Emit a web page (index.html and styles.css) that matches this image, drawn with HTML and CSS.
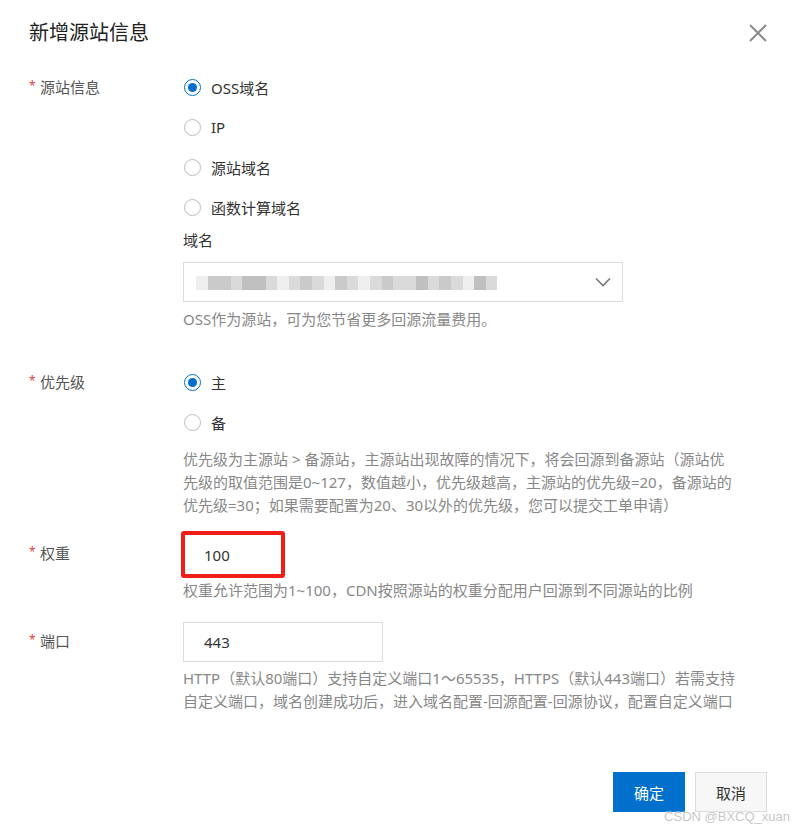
FILE: index.html
```html
<!DOCTYPE html>
<html lang="zh-CN">
<head>
<meta charset="utf-8">
<title>新增源站信息</title>
<link rel="stylesheet" href="styles.css">
</head>
<body>
<div class="dialog">
  <div class="header">
    <div class="title">新增源站信息</div>
    <svg class="close" width="18" height="18" viewBox="0 0 18 18"><path d="M1 1 L17 17 M17 1 L1 17" stroke="#8a8a8a" stroke-width="2" fill="none"/></svg>
  </div>

  <div class="form">
    <div class="row row-origin">
      <div class="label"><span class="req">*</span>源站信息</div>
      <div class="content">
        <div class="radios">
          <div class="radio"><span class="dot checked"></span><span>OSS域名</span></div>
          <div class="radio"><span class="dot"></span><span>IP</span></div>
          <div class="radio"><span class="dot"></span><span>源站域名</span></div>
          <div class="radio"><span class="dot"></span><span>函数计算域名</span></div>
        </div>
        <div class="sublabel">域名</div>
        <div class="select">
          <div class="blur">
            <span class="b c1"></span><span class="b c2"></span><span class="b c2"></span><span class="b c3"></span><span class="b c4"></span><span class="b c4"></span><span class="b c3"></span><span class="b c1"></span><span class="b c3"></span><span class="b c2"></span><span class="b c3"></span><span class="b c1"></span><span class="b c2"></span><span class="b c3"></span><span class="b c1"></span><span class="b c3"></span><span class="b c2"></span><span class="b c3"></span><span class="b c3"></span><span class="b c4"></span><span class="b c3"></span><span class="b c2"></span><span class="b c3"></span><span class="b c1"></span><span class="b c4"></span><span class="b c3"></span>
          </div>
          <svg class="chev" width="16" height="10" viewBox="0 0 16 10"><path d="M1 1.5 L8 8.5 L15 1.5" stroke="#777" stroke-width="1.6" fill="none"/></svg>
        </div>
        <div class="help">OSS作为源站，可为您节省更多回源流量费用。</div>
      </div>
    </div>

    <div class="row row-priority">
      <div class="label"><span class="req">*</span>优先级</div>
      <div class="content">
        <div class="radios">
          <div class="radio"><span class="dot checked"></span><span>主</span></div>
          <div class="radio"><span class="dot"></span><span>备</span></div>
        </div>
        <div class="help help-multi">优先级为主源站 &gt; 备源站，主源站出现故障的情况下，将会回源到备源站（源站优<br>先级的取值范围是0~127，数值越小，优先级越高，主源站的优先级=20，备源站的<br>优先级=30；如果需要配置为20、30以外的优先级，您可以提交工单申请）</div>
      </div>
    </div>

    <div class="row row-weight">
      <div class="label"><span class="req">*</span>权重</div>
      <div class="content">
        <div class="input weight">100</div>
        <div class="help help-tight">权重允许范围为1~100，CDN按照源站的权重分配用户回源到不同源站的比例</div>
      </div>
    </div>

    <div class="row row-port">
      <div class="label"><span class="req">*</span>端口</div>
      <div class="content">
        <div class="input port">443</div>
        <div class="help help-multi">HTTP（默认80端口）支持自定义端口1～65535，HTTPS（默认443端口）若需支持<br>自定义端口，域名创建成功后，进入域名配置-回源配置-回源协议，配置自定义端口</div>
      </div>
    </div>
  </div>

  <div class="footer">
    <button class="btn primary">确定</button>
    <button class="btn">取消</button>
  </div>
  <div class="watermark">CSDN @BXCQ_xuan</div>
</div>
</body>
</html>
```

FILE: styles.css
```css
* { box-sizing: border-box; }
html, body { margin: 0; padding: 0; background: #fff; }
body {
  font-family: "Noto Sans", "Noto Sans CJK SC", sans-serif;
  font-size: 15px;
  color: #333;
}
.dialog {
  position: relative;
  width: 795px;
  height: 831px;
  background: #fff;
}
.header {
  height: 66px;
  padding: 0 29px;
  display: flex;
  align-items: center;
  justify-content: space-between;
}
.title {
  font-size: 20px;
  color: #222;
  line-height: 26px;
}
.close { margin-right: -1px; }

.form { padding-left: 29px; padding-right: 30px; }
.row {
  display: grid;
  grid-template-columns: 154px 1fr;
}
.label {
  color: #555;
  line-height: 24px;
  display: flex;
  align-items: flex-start;
}
.req {
  color: #e5413a;
  font-size: 12px;
  width: 11px;
  line-height: 22px;
}
.row-origin { margin-top: 9px; }
.row-priority { margin-top: 40px; }
.row-weight { margin-top: 14px; }
.row-weight .label { margin-top: 10px; }
.row-port { margin-top: 21px; }
.row-port .label { margin-top: 7px; }

.radios { display: flex; flex-direction: column; gap: 16px; }
.radio {
  display: flex;
  align-items: center;
  height: 24px;
  gap: 10px;
  color: #333;
}
.dot {
  width: 17px;
  height: 17px;
  border-radius: 50%;
  border: 1px solid #bdbdbd;
  margin-left: 1px;
  display: flex;
  align-items: center;
  justify-content: center;
  background: #fff;
}
.dot.checked { border-color: #0070cc; }
.dot.checked::after {
  content: "";
  width: 9px;
  height: 9px;
  border-radius: 50%;
  background: #0070cc;
}
.sublabel {
  margin-top: 10px;
  line-height: 22px;
  color: #333;
}
.select {
  margin-top: 11px;
  width: 440px;
  height: 40px;
  border: 1px solid #dcdcdc;
  display: flex;
  align-items: center;
  justify-content: space-between;
  padding: 0 11px 0 12px;
}
.blur { display: flex; height: 14px; margin-top: 1px; }
.b { width: 11.6px; height: 14px; }
.c1 { background: #efefef; }
.c2 { background: #cacaca; }
.c3 { background: #dadada; }
.c4 { background: #c0c0c0; }

.help {
  color: #888;
  line-height: 22px;
  margin-top: 6px;
}
.help-multi { line-height: 23px; margin-top: 14px; }
.row-port .help-multi { margin-top: 5px; }
.help-tight { margin-top: 1px; }

.input {
  height: 40px;
  border: 1px solid #dcdcdc;
  padding-left: 20px;
  display: flex;
  align-items: center;
  color: #333;
}
.input.weight {
  width: 104px;
  height: 47px;
  margin-left: -2px;
  border: 4px solid #f21d16;
  border-radius: 3px;
  padding-left: 19px;
}
.input.port { width: 200px; }

.footer {
  position: absolute;
  left: 0;
  right: 28px;
  top: 772px;
  display: flex;
  justify-content: flex-end;
  gap: 10px;
}
.btn {
  width: 72px;
  height: 40px;
  border: 1px solid #dcdcdc;
  background: #f7f7f7;
  color: #333;
  font-family: inherit;
  font-size: 15px;
  padding: 0;
}
.btn.primary {
  background: #0070cc;
  border-color: #0070cc;
  color: #fff;
}
.watermark {
  position: absolute;
  right: 5px;
  top: 809px;
  font-family: "Liberation Sans", sans-serif;
  font-size: 13px;
  color: #c8c8c8;
  text-shadow: 0 0 2px #fff, 0 0 2px #fff;
}
```
